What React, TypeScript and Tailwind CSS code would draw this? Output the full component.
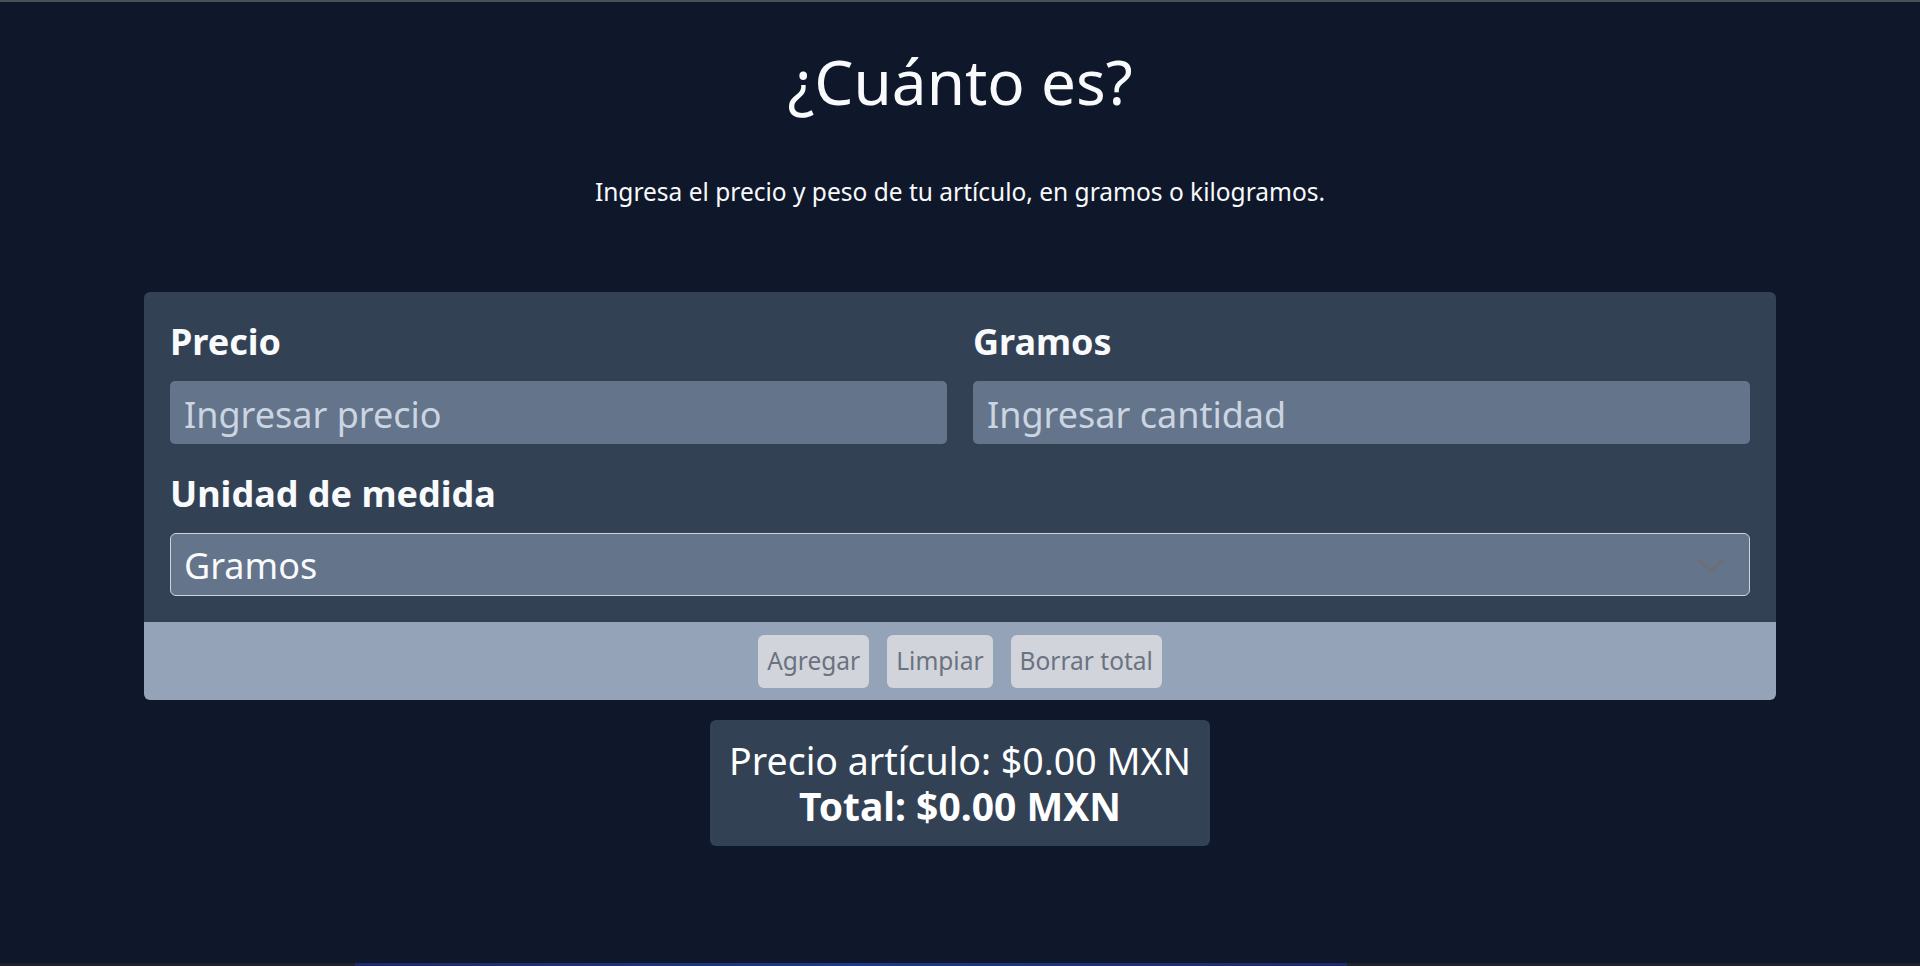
const font = { fontFamily: '"Noto Sans", "Open Sans", sans-serif' };

function Field({ label, placeholder }: { label: string; placeholder: string }) {
  return (
    <div className="flex flex-col">
      <label className="mb-[15px] text-[36px] font-bold leading-[48px] text-[#f8fafc]">{label}</label>
      <input
        className="h-[63px] w-full rounded-[5px] bg-[#64748b] px-[14px] pt-[3px] text-[36px] text-[#f8fafc] outline-none placeholder:text-[#cbd5e1]"
        placeholder={placeholder}
        type="text"
      />
    </div>
  );
}

export default function App() {
  return (
    <div className="flex h-[966px] flex-col bg-[#0f172a]" style={font}>
      <div className="h-[2px] bg-[#4b4f57]" />

      <main className="flex flex-1 flex-col items-center">
        <h1 className="mt-[41px] text-[62px] font-normal leading-[76px] text-[#f8fafc]">¿Cuánto es?</h1>
        <p className="mt-[57px] text-[24.5px] leading-[32px] text-[#f8fafc]">
          Ingresa el precio y peso de tu artículo, en gramos o kilogramos.
        </p>

        <section className="mt-[84px] w-[1632px] overflow-hidden rounded-[6px]">
          <div className="grid grid-cols-2 gap-[26px] bg-[#334155] p-[26px]">
            <Field label="Precio" placeholder="Ingresar precio" />
            <Field label="Gramos" placeholder="Ingresar cantidad" />
            <div className="col-span-2 flex flex-col">
              <label className="mb-[15px] text-[36px] font-bold leading-[48px] text-[#f8fafc]">Unidad de medida</label>
              <div className="relative">
                <select className="h-[63px] w-full appearance-none rounded-[6px] border border-[#cbd5e1] bg-[#64748b] px-[13px] pt-[3px] text-[36px] text-[#f8fafc] outline-none">
                  <option>Gramos</option>
                  <option>Kilogramos</option>
                </select>
                <svg
                  className="pointer-events-none absolute right-[26px] top-[26px]"
                  width="26"
                  height="14"
                  viewBox="0 0 26 14"
                  fill="none"
                  stroke="#6b6f7a"
                  strokeWidth="3.5"
                  strokeLinecap="round"
                  strokeLinejoin="round"
                >
                  <polyline points="2,2 13,12 24,2" />
                </svg>
              </div>
            </div>
          </div>

          <div className="flex justify-center gap-[18px] bg-[#94a3b8] pb-[12px] pt-[13px]">
            {['Agregar', 'Limpiar', 'Borrar total'].map((name) => (
              <button key={name} className="h-[53px] rounded-[6px] bg-[#d1d5db] px-[9px] text-[24.5px] text-[#6b7280]">
                {name}
              </button>
            ))}
          </div>
        </section>

        <div className="mt-[20px] rounded-[6px] bg-[#334155] px-[19px] py-[18px] text-center text-[37.5px] leading-[45px] text-white">
          <div>Precio artículo: $0.00 MXN</div>
          <div className="text-[39px] font-bold">Total: $0.00 MXN</div>
        </div>
      </main>

      <div className="flex h-[3px] bg-[#1f2329]">
        <div className="ml-[355px] w-[992px] bg-gradient-to-r from-[#1e2a6b] via-[#1e3a8a] to-[#1e2a6b]" />
      </div>
    </div>
  );
}
